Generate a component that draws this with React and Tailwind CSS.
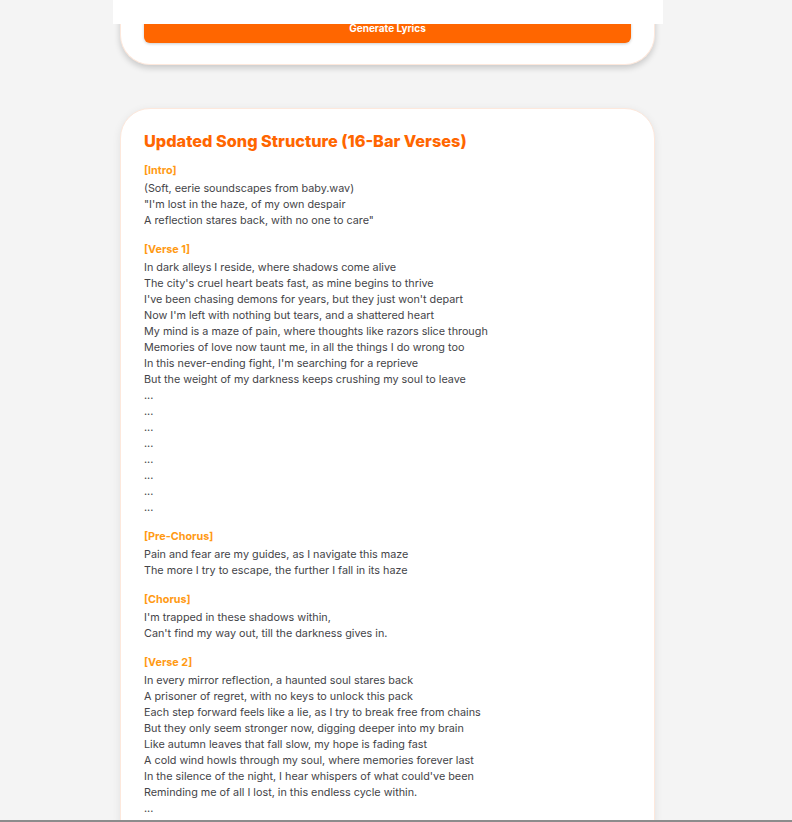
import React from 'react';

const sections = [
  {
    label: '[Intro]',
    lines: [
      '(Soft, eerie soundscapes from baby.wav)',
      '"I\'m lost in the haze, of my own despair',
      'A reflection stares back, with no one to care"',
    ],
  },
  {
    label: '[Verse 1]',
    lines: [
      'In dark alleys I reside, where shadows come alive',
      "The city's cruel heart beats fast, as mine begins to thrive",
      "I've been chasing demons for years, but they just won't depart",
      "Now I'm left with nothing but tears, and a shattered heart",
      'My mind is a maze of pain, where thoughts like razors slice through',
      'Memories of love now taunt me, in all the things I do wrong too',
      "In this never-ending fight, I'm searching for a reprieve",
      'But the weight of my darkness keeps crushing my soul to leave',
      '...', '...', '...', '...', '...', '...', '...', '...',
    ],
  },
  {
    label: '[Pre-Chorus]',
    lines: [
      'Pain and fear are my guides, as I navigate this maze',
      'The more I try to escape, the further I fall in its haze',
    ],
  },
  {
    label: '[Chorus]',
    lines: [
      "I'm trapped in these shadows within,",
      "Can't find my way out, till the darkness gives in.",
    ],
  },
  {
    label: '[Verse 2]',
    lines: [
      'In every mirror reflection, a haunted soul stares back',
      'A prisoner of regret, with no keys to unlock this pack',
      'Each step forward feels like a lie, as I try to break free from chains',
      'But they only seem stronger now, digging deeper into my brain',
      'Like autumn leaves that fall slow, my hope is fading fast',
      'A cold wind howls through my soul, where memories forever last',
      "In the silence of the night, I hear whispers of what could've been",
      'Reminding me of all I lost, in this endless cycle within.',
      '...',
    ],
  },
];

export default function App() {
  return (
    <div className="min-h-screen bg-[#f4f4f4] font-['Inter','Liberation_Sans',sans-serif] pb-10">
      {/* header strip that sits over the scrolled form */}
      <div className="fixed top-0 left-[113px] w-[550px] h-[24px] bg-white z-10"></div>

      <div className="ml-[120px] w-[535px] bg-white rounded-b-[30px] border border-t-0 border-[#fde8dc] shadow-[0_3px_6px_rgba(0,0,0,0.18)] px-[23px] pt-[13px] pb-[21px]">
        <button className="w-full h-[30px] bg-[#ff6600] text-white text-[10px] font-bold rounded-md shadow-[0_1px_3px_rgba(0,0,0,0.2)] pt-[1px]">
          Generate Lyrics
        </button>
      </div>

      <div className="ml-[120px] w-[535px] mt-[43px] bg-white rounded-[30px] border border-[#fde8dc] shadow-[0_2px_8px_rgba(0,0,0,0.08)] px-[23px] pt-[22px] pb-8">
        <h2 className="text-[16.3px] leading-[21px] font-extrabold text-[#ff6600]">
          Updated Song Structure (16-Bar Verses)
        </h2>
        <div className="mt-[11px] flex flex-col gap-[13px]">
          {sections.map((section, idx) => (
            <div key={idx}>
              <div className="text-[10.8px] leading-[16px] font-bold text-[#ff9a14] mb-[2px]">
                {section.label}
              </div>
              {section.lines.map((line, i) => (
                <div key={i} className="text-[10.8px] leading-[16px] text-[#444448]">
                  {line}
                </div>
              ))}
            </div>
          ))}
        </div>
      </div>

      <div className="fixed bottom-0 left-0 w-full h-[2px] bg-[#8c8c8c] z-10"></div>
    </div>
  );
}
